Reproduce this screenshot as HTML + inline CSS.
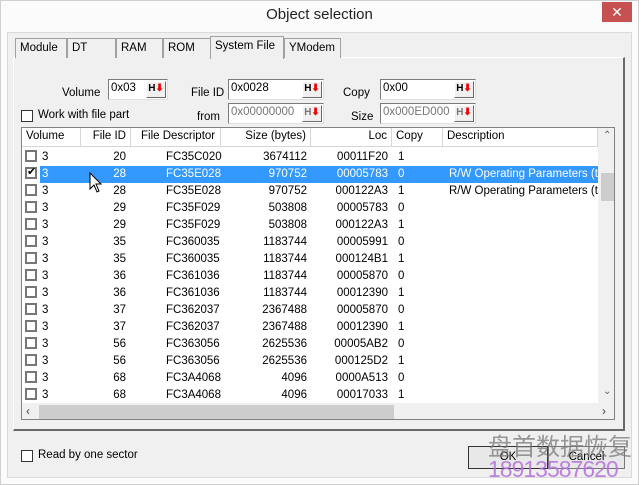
<!DOCTYPE html>
<html><head><meta charset="utf-8"><style>
*{box-sizing:border-box;margin:0;padding:0}
body{width:639px;height:485px;background:#fff;font-family:"Liberation Sans",sans-serif;font-size:11.5px;color:#000;position:relative;overflow:hidden}
.a{position:absolute;white-space:nowrap}
.frame{left:0;top:0;width:639px;height:485px;border:1px solid #d0d0d0;background:#fbfbfb}
.body{left:7px;top:32px;width:625px;height:446px;background:#f0f0f0;border:1px solid #dadada}
.tab{top:38px;height:20px;border:1px solid #a0a0a0;border-bottom:none;background:#f0f0f0;padding:3px 0 0 4px}
.page{left:13px;top:57px;width:612px;height:374px;border:1px solid #fff;border-right:2px solid #696969;border-bottom:2px solid #696969;background:#f0f0f0}
.inp{height:21px;border:1px solid #7a7a7a;border-right-color:#e0e0e0;border-bottom-color:#e0e0e0;background:#fff;padding:2px 2px}
.btn{width:20px;height:17px;top:1px;right:1px;background:#f0f0f0;border:1px solid #fff;border-right-color:#696969;border-bottom-color:#696969;font-weight:bold;font-size:10px;text-align:center;line-height:14px}
.btn span{color:#e00}
.list{left:21px;top:127px;width:594px;height:293px;border:1px solid #828282;background:#fff;overflow:hidden}
.hd{top:0;height:19px;border-right:1px solid #d6d6d6;border-bottom:1px solid #d6d6d6;padding:2px 4px;background:#fff;overflow:hidden}
.row{left:0;width:576px;height:17px}
.row div{position:absolute;top:2px;white-space:nowrap}
.sel{background:#3399ff;color:#fff}
.cb{position:absolute;left:4px;top:2px;width:12px;height:12px;border:2px solid #777;background:#fff}
.r{text-align:right}
</style></head><body>
<div class="a frame"></div>
<div class="a" style="left:0;top:6px;width:639px;text-align:center;font-size:15px;color:#222">Object selection</div>
<div class="a" style="left:602px;top:2px;width:30px;height:20px;background:#c75050;color:#fff;text-align:center;font-size:14px;line-height:20px">✕</div>
<div class="a body"></div>
<div class="a page"></div>
<div class="a tab" style="left:15px;width:52px">Module</div>
<div class="a tab" style="left:67px;width:49px">DT</div>
<div class="a tab" style="left:116px;width:47px">RAM</div>
<div class="a tab" style="left:163px;width:48px">ROM</div>
<div class="a tab" style="left:210px;top:36px;height:23px;width:74px;border-bottom:none">System File</div>
<div class="a tab" style="left:284px;width:57px">YModem</div>

<div class="a" style="left:62px;top:87px">Volume</div>
<div class="a inp" style="left:108px;top:79px;width:60px">0x03<div class="a btn">H<span>⬇</span></div></div>
<div class="a" style="left:191px;top:87px">File ID</div>
<div class="a inp" style="left:228px;top:79px;width:96px">0x0028<div class="a btn">H<span>⬇</span></div></div>
<div class="a" style="left:197px;top:111px">from</div>
<div class="a inp" style="left:228px;top:103px;width:96px;color:#777">0x00000000<div class="a btn">H<span>⬇</span></div></div>
<div class="a" style="left:343px;top:87px">Copy</div>
<div class="a inp" style="left:380px;top:79px;width:96px">0x00<div class="a btn">H<span>⬇</span></div></div>
<div class="a" style="left:351px;top:111px">Size</div>
<div class="a inp" style="left:380px;top:103px;width:96px;color:#777">0x000ED000<div class="a btn">H<span>⬇</span></div></div>
<div class="a" style="left:21px;top:110px;width:12px;height:12px;border:1px solid #333;background:#fff"></div>
<div class="a" style="left:38px;top:109px">Work with file part</div>

<div class="a list">
<div class="a hd" style="left:0;width:59px">Volume</div>
<div class="a hd r" style="left:59px;width:50px">File ID</div>
<div class="a hd" style="left:109px;width:90px;padding-left:10px">File Descriptor</div>
<div class="a hd r" style="left:199px;width:90px">Size (bytes)</div>
<div class="a hd r" style="left:289px;width:81px">Loc</div>
<div class="a hd" style="left:370px;width:51px">Copy</div>
<div class="a hd" style="left:421px;width:155px">Description</div>
<div class="a hd" style="left:576px;width:17px;border:none"></div>
<div id="rows"></div>
<div class="a" style="left:576px;top:0;width:17px;height:275px;background:#f0f0f0"></div>
<div class="a" style="left:581px;top:2px;font-size:10px;color:#606060">⌃</div>
<div class="a" style="left:579px;top:45px;width:13px;height:28px;background:#cdcdcd"></div>
<div class="a" style="left:581px;top:258px;font-size:10px;color:#606060">⌄</div>
<div class="a" style="left:0;top:275px;width:593px;height:17px;background:#f0f0f0"></div>
<div class="a" style="left:17px;top:277px;width:355px;height:14px;background:#cdcdcd"></div>
<div class="a" style="left:4px;top:276px;font-size:12px;color:#444">‹</div>
<div class="a" style="left:580px;top:276px;font-size:12px;color:#444">›</div>
</div>

<div class="a" style="left:21px;top:450px;width:12px;height:12px;border:1px solid #333;background:#fff"></div>
<div class="a" style="left:38px;top:449px">Read by one sector</div>
<div class="a" style="left:468px;top:446px;width:80px;height:23px;border:1px solid #333;background:#e8e8e8;text-align:center;line-height:21px">OK</div>
<div class="a" style="left:548px;top:446px;width:77px;height:23px;border:1px solid #777;background:#e8e8e8;text-align:center;line-height:21px">Cancel</div>
<div class="a" style="left:488px;top:427px;font-family:'Noto Sans CJK SC',sans-serif;font-size:24px;color:rgba(120,120,120,.75)">盘首数据恢复</div>
<div class="a" style="left:488px;top:456px;font-size:23px;color:rgba(180,110,220,.85);letter-spacing:-1px">18913587620</div>

<script>
var d=[["20","FC35C020","3674112","00011F20","1",""],["28","FC35E028","970752","00005783","0","R/W Operating Parameters (t"],["28","FC35E028","970752","000122A3","1","R/W Operating Parameters (t"],["29","FC35F029","503808","00005783","0",""],["29","FC35F029","503808","000122A3","1",""],["35","FC360035","1183744","00005991","0",""],["35","FC360035","1183744","000124B1","1",""],["36","FC361036","1183744","00005870","0",""],["36","FC361036","1183744","00012390","1",""],["37","FC362037","2367488","00005870","0",""],["37","FC362037","2367488","00012390","1",""],["56","FC363056","2625536","00005AB2","0",""],["56","FC363056","2625536","000125D2","1",""],["68","FC3A4068","4096","0000A513","0",""],["68","FC3A4068","4096","00017033","1",""]];
var h="";d.forEach(function(r,i){var t=21+i*17,s=i==1,c=s?'color:#fff':'';
h+='<div class="a row" style="top:'+t+'px"><div class="cb" style="top:1px;left:3px">'+(s?'<span style="position:absolute;left:0;top:-4px;font-size:11px">✔</span>':'')+'</div>'+
(s?'<div class="sel" style="left:18px;top:0;width:558px;height:17px"></div>':'')+
'<div style="left:20px;'+c+'">3</div>'+
'<div class="r" style="right:'+(576-104)+'px;'+c+'">'+r[0]+'</div>'+
'<div style="left:144px;'+c+'">'+r[1]+'</div>'+
'<div class="r" style="right:'+(576-285)+'px;'+c+'">'+r[2]+'</div>'+
'<div class="r" style="right:'+(576-366)+'px;'+c+'">'+r[3]+'</div>'+
'<div style="left:376px;'+c+'">'+r[4]+'</div>'+
'<div style="left:427px;width:149px;overflow:hidden;'+c+'">'+r[5]+'</div></div>';});
document.getElementById("rows").innerHTML=h;
</script>
<svg class="a" style="left:89px;top:172px" width="14" height="22" viewBox="0 0 14 22"><path d="M1 1 L1 17 L5 13 L8 20 L10 19 L7 12 L12 12 Z" fill="#fff" stroke="#000" stroke-width="1"/></svg>
</body></html>
